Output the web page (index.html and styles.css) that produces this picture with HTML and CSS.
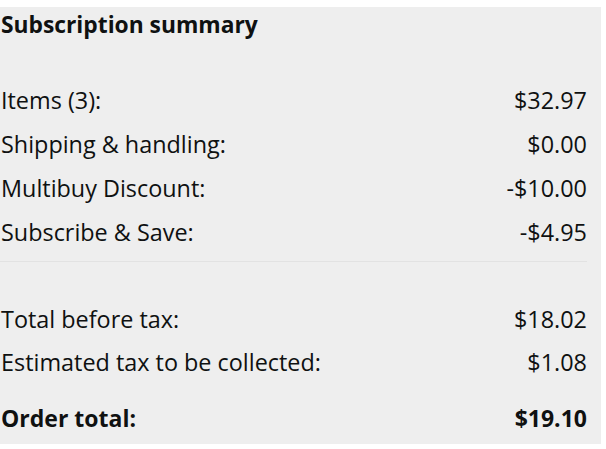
FILE: index.html
```html
<!DOCTYPE html>
<html>
<head>
<meta charset="utf-8">
<link rel="stylesheet" href="styles.css">
</head>
<body>
<section class="summary">
  <h2 class="title">Subscription summary</h2>
  <div class="group first">
    <div class="row"><span>Items (3):</span><span>$32.97</span></div>
    <div class="row"><span>Shipping &amp; handling:</span><span>$0.00</span></div>
    <div class="row"><span>Multibuy Discount:</span><span>-$10.00</span></div>
    <div class="row"><span>Subscribe &amp; Save:</span><span>-$4.95</span></div>
  </div>
  <hr class="divider">
  <div class="group second">
    <div class="row"><span>Total before tax:</span><span>$18.02</span></div>
    <div class="row tight"><span>Estimated tax to be collected:</span><span>$1.08</span></div>
  </div>
  <div class="row total"><span>Order total:</span><span>$19.10</span></div>
</section>
</body>
</html>
```

FILE: styles.css
```css
html, body {
  margin: 0;
  padding: 0;
  background: #ffffff;
}
.summary {
  margin-top: 7px;
  width: 601px;
  height: 437px;
  box-sizing: border-box;
  background: #eeeeee;
  padding: 0 14px 0 1px;
  font-family: "Open Sans", "Noto Sans", sans-serif;
  color: #0f1111;
  display: flex;
  flex-direction: column;
}
.title {
  margin: 0;
  font-size: 22.8px;
  font-weight: 700;
  line-height: 36px;
}
.group {
  display: flex;
  flex-direction: column;
}
.first {
  margin-top: 35px;
}
.row {
  display: flex;
  justify-content: space-between;
  font-size: 23.4px;
  line-height: 44px;
}
.divider {
  margin: 7px 0 0 -1px;
  border: 0;
  height: 1px;
  background: #e2e2e2;
}
.second {
  margin-top: 35px;
}
.tight {
  line-height: 42px;
}
.total {
  margin-top: 13px;
  font-weight: 700;
  font-size: 23px;
}
```
